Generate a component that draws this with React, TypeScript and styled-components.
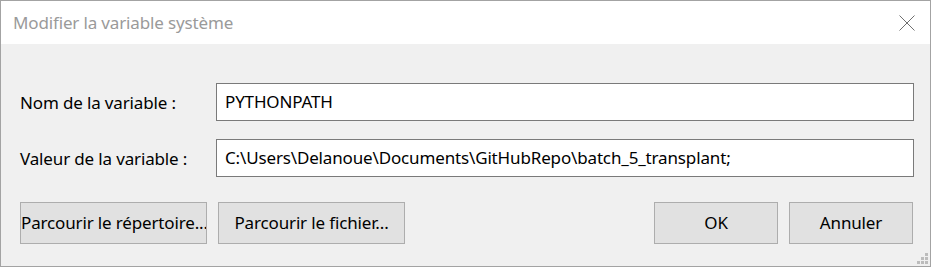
import React from "react";
import styled, { createGlobalStyle } from "styled-components";

const Global = createGlobalStyle`
  html, body { margin: 0; padding: 0; background: #ffffff; }
  body { font-family: "Noto Sans", "Open Sans", sans-serif; }
`;

const Window = styled.div`
  box-sizing: border-box;
  width: 931px;
  height: 267px;
  border: 1px solid #a3a3a3;
  background: #f0f0f0;
  display: flex;
  flex-direction: column;
  position: relative;
  font-family: "Noto Sans", sans-serif;
  font-size: 17px;
  letter-spacing: -0.15px;
  color: #000;
`;

const TitleBar = styled.div`
  height: 43px;
  background: #ffffff;
  display: flex;
  align-items: center;
  justify-content: space-between;
  padding: 0 15px 0 12px;
`;

const Title = styled.span`
  font-size: 17px;
  color: #9a9a9a;
  padding-bottom: 1px;
`;

const CloseButton = styled.div`
  width: 16px;
  height: 16px;
  display: flex;
  align-items: center;
  justify-content: center;
`;

const Body = styled.div`
  flex: 1;
  display: flex;
  flex-direction: column;
  padding: 39px 16px 0 19px;
`;

const Fields = styled.div`
  display: grid;
  grid-template-columns: 196px 698px;
  grid-auto-rows: 38px;
  row-gap: 18px;
  align-items: center;
`;

const Label = styled.label`
  font-size: 17px;
  padding-top: 1px;
`;

const TextBox = styled.div`
  box-sizing: border-box;
  height: 38px;
  border: 1px solid #7a7a7a;
  background: #ffffff;
  display: flex;
  align-items: center;
  padding: 0 0 2px 8px;
  font-size: 17px;
  white-space: nowrap;
`;

const ButtonRow = styled.div`
  display: flex;
  margin-top: 25px;
  padding-right: 1px;
`;

const ButtonGroup = styled.div<{ $gap: number }>`
  display: flex;
  gap: ${(p) => p.$gap}px;
`;

const Spacer = styled.div`
  flex: 1;
`;

const Button = styled.button<{ $w: number }>`
  box-sizing: border-box;
  width: ${(p) => p.$w}px;
  height: 42px;
  border: 1px solid #adadad;
  background: #e1e1e1;
  font-family: "Noto Sans", sans-serif;
  font-size: 17px;
  letter-spacing: -0.15px;
  color: #000;
  padding: 0 0 2px 0;
  margin: 0;
  white-space: nowrap;
  overflow: hidden;
`;

const Grip = styled.svg`
  position: absolute;
  right: 0;
  bottom: 0;
`;

export default function App() {
  return (
    <>
      <Global />
      <Window>
        <TitleBar>
          <Title>Modifier la variable système</Title>
          <CloseButton>
            <svg width="16" height="16" viewBox="0 0 16 16">
              <path d="M0.5 0.5 L15.5 15.5 M15.5 0.5 L0.5 15.5" stroke="#6f6f6f" strokeWidth="1" fill="none" />
            </svg>
          </CloseButton>
        </TitleBar>
        <Body>
          <Fields>
            <Label>Nom de la variable :</Label>
            <TextBox>PYTHONPATH</TextBox>
            <Label>Valeur de la variable :</Label>
            <TextBox>C:\Users\Delanoue\Documents\GitHubRepo\batch_5_transplant;</TextBox>
          </Fields>
          <ButtonRow>
            <ButtonGroup $gap={11}>
              <Button $w={187}>Parcourir le répertoire...</Button>
              <Button $w={187}>Parcourir le fichier...</Button>
            </ButtonGroup>
            <Spacer />
            <ButtonGroup $gap={11}>
              <Button $w={124}>OK</Button>
              <Button $w={124}>Annuler</Button>
            </ButtonGroup>
          </ButtonRow>
        </Body>
        <Grip width="14" height="14" viewBox="0 0 14 14">
          <g fill="#bcbcbc">
            <rect x="9" y="1" width="3" height="3" />
            <rect x="5" y="5" width="3" height="3" />
            <rect x="9" y="5" width="3" height="3" />
            <rect x="1" y="9" width="3" height="3" />
            <rect x="5" y="9" width="3" height="3" />
            <rect x="9" y="9" width="3" height="3" />
          </g>
        </Grip>
      </Window>
    </>
  );
}
